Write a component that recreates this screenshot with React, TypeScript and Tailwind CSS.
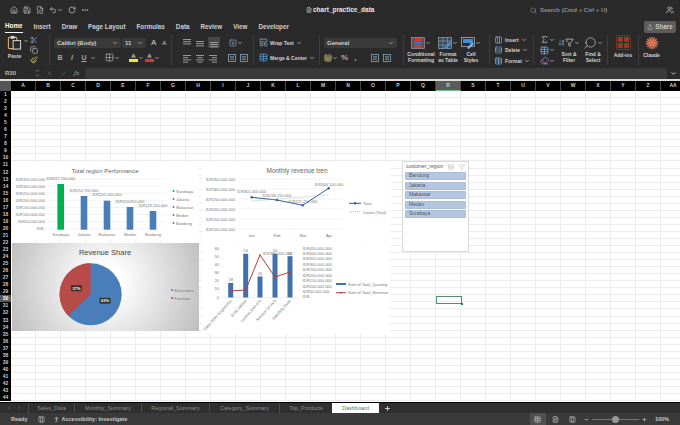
import React from "react";
import {
  House, Save, FilePen, Undo2, RotateCw, Ellipsis, Search, Users, Share,
  Scissors, Copy, Paintbrush, ChevronDown, ChevronUp, X, Check, Grid2x2,
  Sigma, Filter, ArrowDownAZ, Eraser, Table, FileText, Columns3, Minus, Plus,
  ChevronLeft, ChevronRight, PersonStanding, Rows3, Sheet, SquareArrowDown, LayoutPanelTop,
} from "lucide-react";

const cols = ["A","B","C","D","E","F","G","H","I","J","K","L","M","N","O","P","Q","R","S","T","U","V","W","X","Y","Z","AA"];
const rows = Array.from({ length: 44 }, (_, i) => i + 1);
const tabs = [
  { name: "Sales_Data", w: "w-[46px]" },
  { name: "Monthly_Summary", w: "w-[67px]" },
  { name: "Regional_Summary", w: "w-[68px]" },
  { name: "Category_Summary", w: "w-[70px]" },
  { name: "Top_Products", w: "w-[53px]" },
];
const menu = ["Home", "Insert", "Draw", "Page Layout", "Formulas", "Data", "Review", "View", "Developer"];
const regions = ["Bandung", "Jakarta", "Makassar", "Medan", "Surabaya"];

const Chevron = () => <ChevronDown className="w-[6px] h-[6px] text-[#bbb] shrink-0" strokeWidth={3} />;

const Divider = () => <div className="w-px h-[30px] bg-[#3d3d3d] shrink-0" />;

// little stack of text lines for the alignment buttons
const Lines = ({ widths, align = "left", y = 2 }: { widths: number[]; align?: string; y?: number }) => (
  <svg viewBox="0 0 10 10" className="w-[10px] h-[10px] shrink-0">
    {widths.map((w, i) => {
      const x = align === "left" ? 1 : align === "right" ? 9 - w : 5 - w / 2;
      return <rect key={i} x={x} y={y + i * 2.2} width={w} height="0.9" fill="#a8a8a8" />;
    })}
  </svg>
);

const Indent = () => (
  <svg viewBox="0 0 10 10" className="w-[10px] h-[10px] shrink-0">
    <rect x="1.5" y="1.5" width="7" height="7" fill="none" stroke="#7fa6c9" strokeWidth="0.8" />
    <rect x="3" y="3.5" width="4" height="0.8" fill="#bbb" />
    <rect x="3" y="5.7" width="4" height="0.8" fill="#bbb" />
  </svg>
);

const PasteIcon = () => (
  <svg viewBox="0 0 16 16" className="w-[15px] h-[15px]">
    <rect x="1.5" y="2.5" width="9" height="12" rx="1" fill="none" stroke="#d9a662" strokeWidth="1.2" />
    <rect x="4" y="1" width="4" height="3" fill="#d8d8d8" />
    <rect x="6.5" y="6" width="8" height="9" fill="#2a2a2a" stroke="#e0e0e0" strokeWidth="1" />
  </svg>
);

const CondIcon = () => (
  <svg viewBox="0 0 14 12" className="w-[14px] h-[12px]">
    <rect x="0.5" y="0.5" width="13" height="11" fill="#555" stroke="#aaa" strokeWidth="0.6" />
    <rect x="3.5" y="1" width="7" height="3" fill="#d9382c" />
    <rect x="3.5" y="4.5" width="7" height="3" fill="#4472c4" />
    <rect x="3.5" y="8" width="7" height="3" fill="#d9382c" />
  </svg>
);

const TableIcon = () => (
  <svg viewBox="0 0 14 12" className="w-[14px] h-[12px]">
    <rect x="0.5" y="0.5" width="13" height="11" fill="#3a4a58" stroke="#9fb4c7" strokeWidth="0.6" />
    <path d="M0.5 4H13.5M0.5 8H13.5M5 0.5V11.5M9.5 0.5V11.5" stroke="#9fb4c7" strokeWidth="0.5" />
    <path d="M6 11L12 4L14 6L8 12Z" fill="#3f8fd8" />
  </svg>
);

const CellIcon = () => (
  <svg viewBox="0 0 14 12" className="w-[14px] h-[12px]">
    <rect x="0.5" y="0.5" width="13" height="9" fill="none" stroke="#b8c4cf" strokeWidth="0.7" />
    <rect x="2" y="2" width="10" height="4" fill="#3f8fd8" />
    <path d="M6 11L11 5L13 7L8 12Z" fill="#7ab0e0" />
  </svg>
);

const AddInsIcon = () => (
  <svg viewBox="0 0 16 16" className="w-[15px] h-[15px]">
    <rect x="0.5" y="0.5" width="15" height="15" rx="1" fill="none" stroke="#7a3a24" />
    <rect x="2" y="2" width="5.3" height="5.3" fill="#8f4026" />
    <rect x="8.7" y="2" width="5.3" height="5.3" fill="#8f4026" />
    <rect x="2" y="8.7" width="5.3" height="5.3" fill="#8f4026" />
    <rect x="8.7" y="8.7" width="5.3" height="5.3" fill="#8f4026" />
  </svg>
);

const ClaudeIcon = () => (
  <svg viewBox="0 0 16 16" className="w-[14px] h-[14px]">
    {[0, 25, 50, 78, 105, 130, 155].map((a) => (
      <line key={a} x1="8" y1="1" x2="8" y2="15" stroke="#d97757" strokeWidth="1.7" transform={`rotate(${a} 8 8)`} />
    ))}
  </svg>
);

const Ribbon = () => (
  <div className="h-[34px] bg-[#2a2a2a] flex items-center pl-[6px] text-[#d2d2d2] font-bold text-[5px] leading-[6px] shrink-0">
    {/* Clipboard */}
    <div className="w-[43px] shrink-0 flex h-full pt-[2px]">
      <div className="flex flex-col items-center w-[17px]">
        <PasteIcon />
        <span className="mt-[3px]">Paste</span>
      </div>
      <div className="h-[12px] flex items-center"><Chevron /></div>
      <div className="flex flex-col gap-[2px] ml-[1px] items-center pt-[1px]">
        <Scissors className="w-[8px] h-[8px] text-[#8fa6c7]" />
        <Copy className="w-[8px] h-[8px] text-[#bbb]" />
        <Paintbrush className="w-[8px] h-[8px] text-[#d8c070]" />
      </div>
    </div>
    <Divider />
    {/* Font */}
    <div className="w-[121px] shrink-0 pl-[4px] flex flex-col gap-[5px]">
      <div className="flex items-center gap-[1px] h-[10px]">
        <div className="w-[67px] h-[10px] bg-[#3a3a3a] rounded-[2px] flex items-center justify-between px-[3px] text-[6px]">
          Calibri (Body)<Chevron />
        </div>
        <div className="w-[24px] h-[10px] bg-[#3a3a3a] rounded-[2px] flex items-center justify-between px-[3px] text-[6px]">
          11<Chevron />
        </div>
        <span className="text-[8px] ml-[4px] font-normal">A</span>
        <span className="text-[6px] ml-[5px] font-normal">A</span>
      </div>
      <div className="flex items-center h-[10px] text-[7px] text-[#a8a8a8]">
        <span className="w-[6px] ml-[3px] text-center">B</span>
        <span className="w-[6px] ml-[6px] text-center italic">I</span>
        <span className="w-[6px] ml-[6px] text-center underline">U</span>
        <span className="ml-[3px]"><Chevron /></span>
        <Grid2x2 className="w-[9px] h-[9px] ml-[9px] text-[#ccc]" strokeWidth={1.5} />
        <Chevron />
        <div className="ml-[9px] flex flex-col items-center w-[9px]">
          <span className="text-[6px] leading-[6px] text-[#ccc]">A</span>
          <div className="w-[9px] h-[3px] bg-[#f2e44a]" />
        </div>
        <Chevron />
        <div className="ml-[1px] flex flex-col items-center w-[9px]">
          <span className="text-[6px] leading-[6px] text-[#ccc]">A</span>
          <div className="w-[9px] h-[3px] bg-[#d9382c]" />
        </div>
        <Chevron />
      </div>
    </div>
    <Divider />
    {/* Alignment */}
    <div className="w-[81px] shrink-0 pl-[10px] flex flex-col gap-[5px]">
      <div className="flex items-center h-[10px] gap-[3px]">
        <Lines widths={[8, 8, 8]} y={1} />
        <Lines widths={[8, 8, 8]} y={3} />
        <div className="bg-[#474747] rounded-[1px] w-[12px] h-[11px] flex items-center justify-center"><Lines widths={[8, 8, 8]} y={4} /></div>
        <span className="ml-[6px] text-[#8fa6c7] flex items-center">
          <SquareArrowDown className="w-[8px] h-[8px]" /><Chevron />
        </span>
      </div>
      <div className="flex items-center h-[10px] gap-[3px]">
        <Lines widths={[8, 5, 8, 5]} />
        <Lines widths={[8, 5, 8, 5]} align="center" />
        <Lines widths={[8, 5, 8, 5]} align="right" />
        <span className="ml-[6px] flex gap-[2px]"><Indent /><Indent /></span>
      </div>
    </div>
    <Divider />
    <div className="w-[65px] shrink-0 pl-[5px] flex flex-col gap-[6px]">
      <div className="flex items-center gap-[2px] h-[9px]"><LayoutPanelTop className="w-[9px] h-[9px] text-[#8fa6c7]" />Wrap Text<Chevron /></div>
      <div className="flex items-center gap-[2px] h-[9px]"><Table className="w-[9px] h-[9px] text-[#5b9bd5]" />Merge &amp; Center<Chevron /></div>
    </div>
    <Divider />
    {/* Number */}
    <div className="w-[83px] shrink-0 pl-[4px] flex flex-col gap-[5px]">
      <div className="w-[73px] h-[10px] bg-[#3a3a3a] rounded-[2px] flex items-center justify-between px-[3px] text-[6px]">General<Chevron /></div>
      <div className="flex items-center h-[10px] text-[#aaa] text-[8px]">
        <Sheet className="w-[8px] h-[8px] text-[#d8c070]" /><Chevron />
        <span className="ml-[3px]">%</span>
        <span className="ml-[6px]">,</span>
        <span className="ml-[14px]"><Indent /></span>
        <span className="ml-[2px]"><Indent /></span>
      </div>
    </div>
    <Divider />
    {/* Styles */}
    <div className="w-[85px] shrink-0 pl-[2px] flex h-full pt-[3px] text-center">
      <div className="w-[30px] flex flex-col items-center gap-[1px]">
        <div className="flex items-center h-[14px]"><CondIcon /><Chevron /></div>
        <span>Conditional Formatting</span>
      </div>
      <div className="w-[24px] flex flex-col items-center gap-[1px]">
        <div className="flex items-center h-[14px]"><TableIcon /><Chevron /></div>
        <span>Format<br />as Table</span>
      </div>
      <div className="w-[22px] flex flex-col items-center gap-[1px]">
        <div className="flex items-center h-[14px]"><CellIcon /><Chevron /></div>
        <span>Cell<br />Styles</span>
      </div>
    </div>
    <Divider />
    <div className="w-[43px] shrink-0 pl-[4px] flex flex-col gap-[2.5px]">
      <div className="flex items-center gap-[2px] h-[8px]"><Columns3 className="w-[9px] h-[8px] text-[#7ab0e0]" />Insert<Chevron /></div>
      <div className="flex items-center gap-[2px] h-[8px]"><Rows3 className="w-[9px] h-[8px] text-[#7ab0e0]" />Delete<Chevron /></div>
      <div className="flex items-center gap-[2px] h-[8px]"><Table className="w-[9px] h-[8px] text-[#7ab0e0]" />Format<Chevron /></div>
    </div>
    <Divider />
    {/* Editing */}
    <div className="w-[73px] shrink-0 pl-[6px] flex h-full items-start pt-[2px] text-center">
      <div className="flex flex-col gap-[1.5px] w-[15px] text-[#bbb] shrink-0">
        <div className="flex items-center"><Sigma className="w-[9px] h-[9px]" /><Chevron /></div>
        <div className="flex items-center"><Table className="w-[9px] h-[9px] text-[#7ab0e0]" /><Chevron /></div>
        <div className="flex items-center"><Eraser className="w-[9px] h-[9px] text-[#c080d8]" /><Chevron /></div>
      </div>
      <div className="flex flex-col items-center w-[24px] ml-[2px] shrink-0 gap-[1px]">
        <div className="flex items-center h-[15px]">
          <ArrowDownAZ className="w-[7px] h-[13px] text-[#7ab0e0]" />
          <Filter className="w-[9px] h-[9px] text-[#ccc]" />
          <Chevron />
        </div>
        <span>Sort &amp;<br />Filter</span>
      </div>
      <div className="flex flex-col items-center w-[24px] shrink-0 gap-[1px]">
        <div className="flex items-center h-[15px]">
          <Search className="w-[14px] h-[14px] text-[#ccc] -scale-x-100" strokeWidth={1.2} />
          <Chevron />
        </div>
        <span>Find &amp;<br />Select</span>
      </div>
    </div>
    <Divider />
    <div className="w-[30px] shrink-0 flex flex-col items-center h-full pt-[2px] gap-[2px]">
      <AddInsIcon />
      <span>Add-ins</span>
    </div>
    <Divider />
    <div className="w-[25px] shrink-0 flex flex-col items-center h-full pt-[3px] gap-[2px]">
      <ClaudeIcon />
      <span>Claude</span>
    </div>
  </div>
);

const axisText = "fill-[#777] text-[4px]";

const RegionChart = () => {
  const bars = [
    { n: "Surabaya", x: 48.7, top: 21, ly: 18, v: "IDR317.700.000", c: "#00b050" },
    { n: "Jakarta", x: 72, top: 33, ly: 30, v: "IDR252.700.000", c: "#4a7ebb" },
    { n: "Makassar", x: 95, top: 37.7, ly: 33.5, v: "IDR200.100.000", c: "#4a7ebb" },
    { n: "Medan", x: 118, top: 44, ly: 41, v: "IDR153.650.000", c: "#4a7ebb" },
    { n: "Bandung", x: 141, top: 48, ly: 44.5, v: "IDR129.150.000", c: "#4a7ebb" },
  ];
  const ticks = ["IDR350.000.000","IDR300.000.000","IDR250.000.000","IDR200.000.000","IDR150.000.000","IDR100.000.000","IDR50.000.000","IDR-"];
  return (
    <svg viewBox="0 0 187 78" className="absolute left-[12px] top-[162px] w-[187px] h-[78px] bg-white">
      <text x="93" y="11" textAnchor="middle" className="fill-[#666] text-[6px]">Total region Performance</text>
      {ticks.map((t, i) => (
        <g key={t}>
          <line x1="35" x2="153" y1={17 + i * 7.1} y2={17 + i * 7.1} stroke="#e6e6e6" strokeWidth="0.5" />
          <text x="33" y={18.5 + i * 7.1} textAnchor="end" className={axisText}>{t}</text>
        </g>
      ))}
      {bars.map((b) => (
        <g key={b.n}>
          <rect x={b.x - 3.3} y={b.top + 1} width="6.6" height={66.7 - b.top} fill={b.c} />
          <text x={b.x} y={b.ly} textAnchor="middle" className={axisText}>{b.v}</text>
          <text x={b.x} y="74" textAnchor="middle" className={axisText}>{b.n}</text>
        </g>
      ))}
      {bars.map((b, i) => (
        <g key={b.n + "l"}>
          <circle cx="161.5" cy={29 + i * 8} r="1" fill={b.c} />
          <text x="164" y={30.5 + i * 8} className={axisText}>{b.n}</text>
        </g>
      ))}
    </svg>
  );
};

const MonthlyChart = () => {
  const ticks = ["IDR350.000.000","IDR300.000.000","IDR250.000.000","IDR200.000.000","IDR150.000.000","IDR100.000.000"];
  const pts = [[49.7, 35.3], [75, 38], [100.7, 43.3], [126.7, 26.3]];
  return (
    <svg viewBox="0 0 189 79" className="absolute left-[202px] top-[162px] w-[189px] h-[79px] bg-white">
      <text x="95" y="11" textAnchor="middle" className="fill-[#666] text-[6.5px]">Monthly revenue tren</text>
      {ticks.map((t, i) => (
        <g key={t}>
          <line x1="36" x2="140" y1={17 + i * 10} y2={17 + i * 10} stroke="#e6e6e6" strokeWidth="0.5" />
          <text x="4" y={18.5 + i * 10} className={axisText}>{t}</text>
        </g>
      ))}
      <polyline points={pts.map((p) => p.join(",")).join(" ")} fill="none" stroke="#2f5f98" strokeWidth="1" />
      {pts.map(([x, y]) => <circle key={x} cx={x} cy={y} r="1.2" fill="#2f5f98" />)}
      <line x1="49.7" y1="39" x2="126.7" y2="33" stroke="#7fb89a" strokeWidth="0.7" strokeDasharray="1 1" />
      <text x="49.7" y="31" textAnchor="middle" className={axisText}>IDR301.400.000</text>
      <text x="75" y="35" textAnchor="middle" className={axisText}>IDR246.150.000</text>
      <text x="101" y="41" textAnchor="middle" className={axisText}>IDR221.250.000</text>
      <text x="127" y="23.5" textAnchor="middle" className={axisText}>IDR304.100.000</text>
      {([["Jan", 49.7], ["Feb", 75], ["Mar", 101], ["Apr", 127]] as const).map(([m, x]) => (
        <text key={m} x={x} y="75" textAnchor="middle" className={axisText}>{m}</text>
      ))}
      <line x1="147" x2="159" y1="41.3" y2="41.3" stroke="#2f5f98" strokeWidth="1" />
      <circle cx="153" cy="41.3" r="1.2" fill="#2f5f98" />
      <text x="161" y="43" className={axisText}>Total</text>
      <line x1="147" x2="159" y1="49.7" y2="49.7" stroke="#7fb89a" strokeWidth="0.7" strokeDasharray="1 1" />
      <text x="161" y="51.5" className={axisText}>Linear (Total)</text>
    </svg>
  );
};

const PieChart = () => (
  <div className="absolute left-[12px] top-[243px] w-[187px] h-[88px] bg-[radial-gradient(circle_at_50%_45%,#ffffff_15%,#bdbdbd_100%)]">
    <svg viewBox="0 0 187 88" className="w-full h-full">
      <text x="93" y="11.5" textAnchor="middle" className="fill-[#444] text-[7.5px]">Revenue Share</text>
      <circle cx="78.7" cy="51.3" r="31" fill="#4a7ebb" />
      <path d="M78.7 51.3 L78.7 20.3 A31 31 0 0 0 56.4 73 Z" fill="#b84a47" />
      <rect x="59" y="42.3" width="11" height="6" rx="1" fill="#333" />
      <text x="64.5" y="46.8" textAnchor="middle" className="fill-white text-[4px] font-bold">37%</text>
      <rect x="87.5" y="54.7" width="11" height="6" rx="1" fill="#333" />
      <text x="93" y="59.2" textAnchor="middle" className="fill-white text-[4px] font-bold">63%</text>
      <circle cx="160" cy="47" r="1" fill="#4a7ebb" />
      <text x="162.3" y="48.5" className={axisText}>Electronics</text>
      <circle cx="160" cy="55" r="1" fill="#b84a47" />
      <text x="162.3" y="56.5" className={axisText}>Furniture</text>
    </svg>
  </div>
);

const ComboChart = () => {
  const right = ["IDR450.000.000","IDR400.000.000","IDR350.000.000","IDR300.000.000","IDR250.000.000","IDR200.000.000","IDR150.000.000","IDR100.000.000","IDR50.000.000","IDR-"];
  const bars = [[28.7, 18], [43.7, 54], [58, 26], [73, 54], [88, 51]];
  const names = ["Data Other Ergonomic", "King Laptop", "Lenovo Dell #7s", "Monitor 24 inch", "Standing Desk"];
  return (
    <svg viewBox="0 0 188 92" className="absolute left-[202px] top-[242px] w-[188px] h-[92px] bg-white">
      {[60, 50, 40, 30, 20, 10, 0].map((t, i) => (
        <text key={t} x="17" y={7.5 + i * 8.17} textAnchor="end" className={axisText}>{t}</text>
      ))}
      {right.map((t, i) => (
        <text key={t} x="100.7" y={7.5 + i * 5.44} className={axisText}>{t}</text>
      ))}
      <line x1="20" x2="97" y1="55.5" y2="55.5" stroke="#ddd" strokeWidth="0.5" />
      {bars.map(([x, v]) => (
        <g key={x}>
          <rect x={x - 2.5} y={55.5 - v * 0.81} width="5" height={v * 0.81} fill="#3f72ad" />
          <text x={x} y={54 - v * 0.81} textAnchor="middle" className={axisText}>{v}</text>
        </g>
      ))}
      <polyline points="28.7,49 43.7,48 58,13 73,35 88,30" fill="none" stroke="#b0403c" strokeWidth="1" />
      {[[28.7, 49], [43.7, 48], [58, 13], [73, 35], [88, 30]].map(([x, y]) => (
        <circle key={x} cx={x} cy={y} r="0.8" fill="#b0403c" />
      ))}
      <text x="61" y="13" textAnchor="start" className={axisText}>IDR390.000.000</text>
      {names.map((n, i) => (
        <text key={n} x={30 + i * 14.8} y="59" textAnchor="end" transform={`rotate(-48 ${30 + i * 14.8} 59)`} className={axisText}>{n}</text>
      ))}
      <rect x="134" y="41" width="10" height="2" fill="#3f72ad" />
      <text x="146" y="43.5" className={axisText}>Sum of Total_Quantity</text>
      <line x1="134" x2="144" y1="50.7" y2="50.7" stroke="#b0403c" strokeWidth="1" />
      <circle cx="139" cy="50.7" r="0.9" fill="#b0403c" />
      <text x="146" y="52.2" className={axisText}>Sum of Total_Revenue</text>
    </svg>
  );
};

const Slicer = () => (
  <div className="absolute left-[402px] top-[161px] w-[67px] h-[91px] bg-white border border-[#d9d9d9] px-[2px] text-[5px] text-[#555]">
    <div className="flex items-center h-[10px] pl-[1px]">
      customer_region
      <span className="ml-auto flex gap-[5px] pr-[1px] text-[#b5b5b5]">
        <Rows3 className="w-[6px] h-[6px]" />
        <Filter className="w-[6px] h-[6px]" />
      </span>
    </div>
    <div className="flex flex-col gap-[1.5px]">
      {regions.map((r) => (
        <div key={r} className="h-[8px] bg-[#b4c7e2] border border-[#a9bdd8] rounded-[1px] flex items-center pl-[3px]">{r}</div>
      ))}
    </div>
  </div>
);

export default function App() {
  return (
    <div className="relative w-[680px] h-[425px] overflow-hidden flex flex-col bg-[#2a2a2a] font-['Liberation_Sans',Arial,sans-serif] select-none">
      {/* title bar */}
      <div className="h-[20px] flex items-center pl-[10px] pr-[6px] text-[#c8c8c8] shrink-0">
        <div className="w-[296px] flex items-center gap-[5px] shrink-0">
          <House className="w-[8px] h-[8px]" /><Save className="w-[8px] h-[8px]" /><FilePen className="w-[8px] h-[8px]" />
          <span className="flex items-center"><Undo2 className="w-[8px] h-[8px]" /><Chevron /></span>
          <RotateCw className="w-[8px] h-[8px]" /><Ellipsis className="w-[8px] h-[8px]" />
        </div>
        <div className="flex items-center gap-[1px] text-[6.5px] font-bold text-[#e8e8e8]">
          <FileText className="w-[6px] h-[8px] text-[#cfe5d8]" />chart_practice_data
        </div>
        <div className="ml-auto w-[136px] flex items-center gap-[3px] text-[6px] font-bold text-[#8f8f8f]">
          <Search className="w-[7px] h-[7px]" />Search (Cmd + Ctrl + U)
        </div>
        <Users className="w-[8px] h-[8px]" />
      </div>
      {/* menu */}
      <div className="h-[13px] flex items-center pl-[5px] pr-[4px] gap-[11px] text-[6.3px] font-bold text-[#d0d0d0] shrink-0">
        {menu.map((m) => (
          <span key={m} className={m === "Home" ? "border-b border-white text-white pb-[1px] mt-[1px]" : ""}>{m}</span>
        ))}
        <div className="ml-auto h-[12px] w-[32px] bg-[#5c5c5c] rounded-[2px] flex items-center justify-center gap-[2px] text-[#c8c8c8]">
          <Share className="w-[6px] h-[6px]" />Share
        </div>
      </div>
      <Ribbon />
      {/* formula bar */}
      <div className="h-[12px] flex items-center bg-[#2a2a2a] text-[#bbb] shrink-0">
        <span className="w-[35px] pl-[5px] text-[6px] font-bold">R30</span>
        <span className="flex flex-col w-[6px] text-[#aaa]"><ChevronUp className="w-[5px] h-[5px]" strokeWidth={3} /><ChevronDown className="w-[5px] h-[5px]" strokeWidth={3} /></span>
        <span className="flex gap-[7px] items-center text-[#666] ml-[5px] w-[39px]">
          <X className="w-[7px] h-[7px]" /><Check className="w-[7px] h-[7px]" /><span className="italic font-serif text-[7px] text-[#999]">fx</span>
        </span>
        <div className="flex-1 h-[11px] bg-[#3a3a3a]" />
        <ChevronDown className="w-[7px] h-[7px] mx-[3px] text-[#ccc]" strokeWidth={3} />
      </div>
      {/* sheet */}
      <div className="relative flex-1 bg-white flex flex-col overflow-hidden border-t-2 border-[#ddd]">
        <div className="flex h-[10px] bg-black text-[#ccc] text-[5px] font-bold shrink-0">
          <div className="w-[11px] shrink-0 bg-[#555]" />
          {cols.map((c) => (
            <div key={c} className={`w-[25px] shrink-0 flex items-center justify-center border-r border-[#444] ${c === "R" ? "bg-[#5a5a5a] border-b border-b-[#6fbf8f]" : ""}`}>{c}</div>
          ))}
        </div>
        {rows.map((r) => (
          <div key={r} className="flex h-[7.05px] shrink-0">
            <div className={`w-[11px] shrink-0 flex items-center justify-center text-[5px] leading-none font-bold ${r === 30 ? "bg-[#5a5a5a] text-white" : "bg-black text-[#ccc]"}`}>{r}</div>
            {cols.map((c) => (
              <div key={c} className="w-[25px] shrink-0 border-r border-b border-[#ececec]" />
            ))}
          </div>
        ))}
        {/* selected cell */}
        <div className="absolute left-[436px] top-[215px] w-[26px] h-[8px] border border-[#5a8c6e]">
          <div className="absolute right-[-2px] bottom-[-2px] w-[2px] h-[2px] bg-[#1f7a45]" />
        </div>
      </div>
      {/* charts float above the sheet, page coordinates */}
      <RegionChart />
      <MonthlyChart />
      <PieChart />
      <ComboChart />
      <Slicer />
      {/* sheet tabs */}
      <div className="h-[11px] flex items-center bg-[#2f2f2f] border-t border-black text-[5.5px] text-[#8c8c8c] shrink-0">
        <div className="w-[28px] flex items-center justify-center gap-[4px] text-[#666] shrink-0">
          <ChevronLeft className="w-[6px] h-[6px]" strokeWidth={3} /><ChevronRight className="w-[6px] h-[6px]" strokeWidth={3} />
        </div>
        {tabs.map((t) => (
          <div key={t.name} className={`${t.w} shrink-0 border-l border-[#4a4a4a] h-full flex items-center justify-center whitespace-nowrap`}>{t.name}</div>
        ))}
        <div className="w-[47px] h-full bg-white text-[#2f8f5f] flex items-center justify-center shrink-0">Dashboard</div>
        <Plus className="w-[7px] h-[7px] ml-[5px] text-[#ddd]" strokeWidth={3} />
      </div>
      {/* status bar */}
      <div className="h-[12px] flex items-center bg-[#3a3a3a] text-[5.5px] font-bold text-[#c8c8c8] pl-[11px] pr-[11px] shrink-0">
        Ready
        <Columns3 className="w-[7px] h-[7px] ml-[10px]" />
        <PersonStanding className="w-[7px] h-[7px] ml-[8px]" />
        <span className="ml-[2px]">Accessibility: Investigate</span>
        <div className="ml-auto flex items-center h-full">
          <div className="bg-[#505050] h-full w-[16px] flex items-center justify-center"><Table className="w-[7px] h-[7px]" /></div>
          <FileText className="w-[7px] h-[7px] ml-[6px]" />
          <Columns3 className="w-[7px] h-[7px] ml-[10px]" />
          <Minus className="w-[5px] h-[5px] ml-[8px]" strokeWidth={3} />
          <div className="relative w-[47px] h-[1px] bg-[#777] mx-[3px]">
            <div className="absolute left-[20px] top-[-3px] w-[7px] h-[7px] rounded-full bg-[#999]" />
          </div>
          <Plus className="w-[5px] h-[5px]" strokeWidth={3} />
          <span className="ml-[8px]">100%</span>
        </div>
      </div>
    </div>
  );
}
